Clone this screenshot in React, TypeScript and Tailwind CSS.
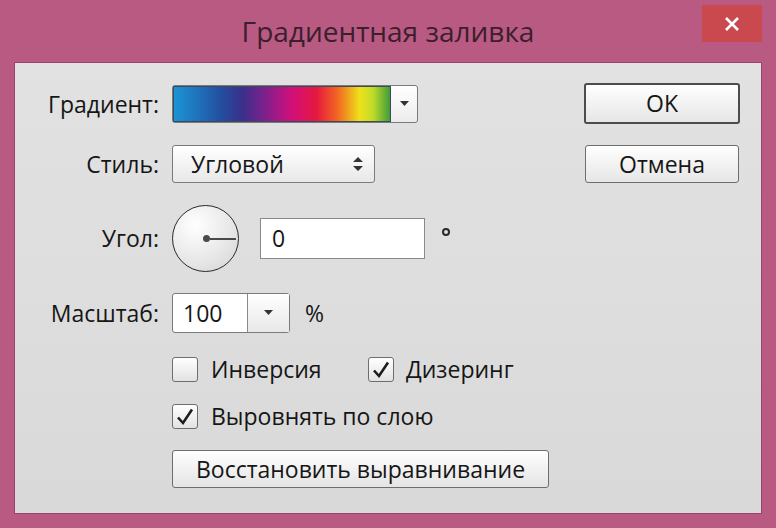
import React from "react";

const font = { fontFamily: '"Open Sans", "Noto Sans", "DejaVu Sans", sans-serif' };

function Check({ checked }: { checked: boolean }) {
  return (
    <div className="w-[26px] h-[25px] rounded-[3px] border border-[#6e6e6e] bg-gradient-to-b from-[#ffffff] to-[#e2e2e2] flex items-center justify-center">
      {checked && (
        <svg width="20" height="20" viewBox="0 0 20 20">
          <path d="M3 10.5 L8 16 L17 2.5" fill="none" stroke="#1c1c1c" strokeWidth="2.6" strokeLinejoin="miter" />
        </svg>
      )}
    </div>
  );
}

function Label({ children }: { children: React.ReactNode }) {
  return <div className="w-[145px] text-right pr-[1px] shrink-0">{children}</div>;
}

export default function App() {
  return (
    <div className="w-[776px] h-[528px] bg-[#b95a82] flex flex-col text-[#161616]" style={font}>
      <div className="h-[62px] flex items-start pl-[74px] pr-[14px] shrink-0">
        <div className="flex-1 flex justify-center pt-[11px] text-[28px] leading-[40px] text-[#3a1f2d]">
          Градиентная заливка
        </div>
        <div className="mt-[5px] w-[60px] h-[37px] bg-[#c9494f] flex items-center justify-center">
          <svg width="16" height="16" viewBox="0 0 16 16">
            <path d="M2 2 L14 14 M14 2 L2 14" stroke="#ffffff" strokeWidth="2.6" />
          </svg>
        </div>
      </div>
      <div className="mx-[14px] h-[452px] border border-[#9c4368] bg-gradient-to-b from-[#e2e2e2] to-[#d9d9d9] flex text-[23px] leading-none shrink-0">
        <div className="flex flex-col pt-[22px]">
          <div className="flex items-center gap-[12px] h-[38px]">
            <Label>Градиент:</Label>
            <div className="w-[246px] h-[38px] rounded-[3px] border border-[#7a7a7a] bg-gradient-to-b from-[#ffffff] to-[#ececec] flex">
              <div className="w-[218px] h-full border border-[#3c4a5c] bg-[linear-gradient(to_right,#1a95d6_0%,#234e9f_22%,#3b2f8a_32%,#8c1d8c_44%,#d40f79_55%,#e5193f_66%,#f26a21_76%,#eee11b_86%,#c1dc28_92%,#3f9c3a_100%)]" />
              <div className="flex-1 flex items-center justify-center">
                <svg width="9" height="6" viewBox="0 0 9 6"><path d="M0 0 L9 0 L4.5 5 Z" fill="#333" /></svg>
              </div>
            </div>
          </div>
          <div className="flex items-center gap-[12px] h-[38px] mt-[22px]">
            <Label>Стиль:</Label>
            <div className="w-[203px] h-[38px] rounded-[3px] border border-[#7a7a7a] bg-gradient-to-b from-[#ffffff] to-[#e8e8e8] flex items-center pl-[18px] pr-[11px]">
              <span className="flex-1">Угловой</span>
              <svg width="10" height="14" viewBox="0 0 10 14">
                <path d="M5 0 L10 5 L0 5 Z M0 9 L10 9 L5 14 Z" fill="#333" />
              </svg>
            </div>
          </div>
          <div className="flex items-center gap-[12px] h-[67px] mt-[22px]">
            <Label>Угол:</Label>
            <div className="w-[67px] h-[67px] rounded-full border-[1.5px] border-[#2a2a2a] bg-[radial-gradient(circle_at_35%_30%,#ffffff,#e6e6e6_60%,#d2d2d2)] flex items-center justify-end pr-[2px]">
              <div className="flex items-center">
                <div className="w-[7px] h-[7px] rounded-full bg-[#4a4a4a]" />
                <div className="w-[26px] h-[2px] bg-[#4a4a4a]" />
              </div>
            </div>
            <div className="ml-[9px] w-[165px] h-[41px] border border-[#8a8a8a] bg-white flex items-center pl-[11px]">
              0
            </div>
            <div className="ml-[5px] self-start mt-[23px] w-[8px] h-[8px] rounded-full border-[2px] border-[#2a2a2a]" />
          </div>
          <div className="flex items-center gap-[12px] h-[40px] mt-[21px]">
            <Label>Масштаб:</Label>
            <div className="w-[118px] h-[40px] rounded-[3px] border border-[#7a7a7a] bg-white flex">
              <div className="w-[74px] flex items-center pl-[10px]">100</div>
              <div className="flex-1 border-l border-[#8a8a8a] bg-gradient-to-b from-[#ffffff] to-[#e8e8e8] flex items-center justify-center">
                <svg width="9" height="6" viewBox="0 0 9 6"><path d="M0 0 L9 0 L4.5 5 Z" fill="#333" /></svg>
              </div>
            </div>
            <span className="ml-[3px]">%</span>
          </div>
          <div className="flex items-center h-[25px] mt-[24px] pl-[157px]">
            <Check checked={false} />
            <span className="ml-[13px] w-[157px]">Инверсия</span>
            <Check checked={true} />
            <span className="ml-[12px]">Дизеринг</span>
          </div>
          <div className="flex items-center h-[25px] mt-[22px] pl-[157px]">
            <Check checked={true} />
            <span className="ml-[13px]">Выровнять по слою</span>
          </div>
          <div className="pl-[157px] mt-[21px]">
            <div className="w-[377px] h-[38px] rounded-[3px] border border-[#6e6e6e] bg-gradient-to-b from-[#ffffff] to-[#e4e4e4] flex items-center justify-center">
              Восстановить выравнивание
            </div>
          </div>
        </div>
        <div className="ml-auto pr-[21px] pt-[20px] flex flex-col items-center">
          <div className="w-[156px] h-[41px] rounded-[3px] border-2 border-[#4c4c4c] bg-gradient-to-b from-[#ffffff] to-[#e6e6e6] flex items-center justify-center">
            OK
          </div>
          <div className="mt-[21px] w-[154px] h-[38px] rounded-[3px] border border-[#6e6e6e] bg-gradient-to-b from-[#ffffff] to-[#e6e6e6] flex items-center justify-center">
            Отмена
          </div>
        </div>
      </div>
    </div>
  );
}
